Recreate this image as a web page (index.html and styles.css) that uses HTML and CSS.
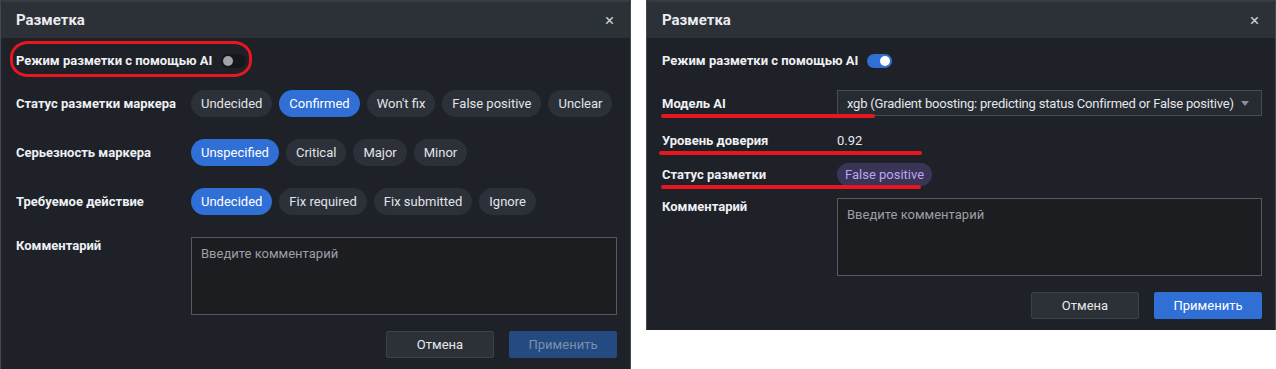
FILE: index.html
```html
<!DOCTYPE html>
<html lang="ru">
<head>
    <meta charset="UTF-8">
    <meta name="viewport" content="width=device-width, initial-scale=1.0">
    <title>Разметка</title>
    <link rel="stylesheet" href="styles.css">
</head>
<body>
    <div class="screens">
        <!-- AI mode off -->
        <section class="dialog dialog-left">
            <header class="dialog-head">
                <h2>Разметка</h2>
                <span class="close">&times;</span>
            </header>
            <div class="dialog-body">
                <div class="row ai-row">
                    <span class="label">Режим разметки с помощью AI</span>
                    <span class="toggle"><span class="knob"></span></span>
                    <span class="mark-ellipse"></span>
                </div>

                <div class="row field-row">
                    <span class="label">Статус разметки маркера</span>
                    <div class="chips">
                        <span class="chip">Undecided</span>
                        <span class="chip active">Confirmed</span>
                        <span class="chip">Won't fix</span>
                        <span class="chip">False positive</span>
                        <span class="chip">Unclear</span>
                    </div>
                </div>

                <div class="row field-row">
                    <span class="label">Серьезность маркера</span>
                    <div class="chips">
                        <span class="chip active">Unspecified</span>
                        <span class="chip">Critical</span>
                        <span class="chip">Major</span>
                        <span class="chip">Minor</span>
                    </div>
                </div>

                <div class="row field-row">
                    <span class="label">Требуемое действие</span>
                    <div class="chips">
                        <span class="chip active">Undecided</span>
                        <span class="chip">Fix required</span>
                        <span class="chip">Fix submitted</span>
                        <span class="chip">Ignore</span>
                    </div>
                </div>

                <div class="row comment-row">
                    <span class="label">Комментарий</span>
                    <div class="textarea">Введите комментарий</div>
                </div>

                <div class="actions">
                    <button class="btn">Отмена</button>
                    <button class="btn btn-primary" disabled>Применить</button>
                </div>
            </div>
        </section>

        <!-- AI mode on -->
        <section class="dialog dialog-right">
            <header class="dialog-head">
                <h2>Разметка</h2>
                <span class="close">&times;</span>
            </header>
            <div class="dialog-body">
                <div class="row ai-row">
                    <span class="label">Режим разметки с помощью AI</span>
                    <span class="toggle on"><span class="knob"></span></span>
                </div>

                <div class="row model-row">
                    <span class="label">Модель AI</span>
                    <div class="select">
                        <span class="select-text">xgb (Gradient boosting: predicting status Confirmed or False positive)</span>
                        <span class="caret"></span>
                    </div>
                    <span class="underline u-model"></span>
                </div>

                <div class="row info-row conf-row">
                    <span class="label">Уровень доверия</span>
                    <span class="value">0.92</span>
                    <span class="underline u-conf"></span>
                </div>

                <div class="row info-row status-row">
                    <span class="label">Статус разметки</span>
                    <span class="badge">False positive</span>
                    <span class="underline u-status"></span>
                </div>

                <div class="row comment-row">
                    <span class="label">Комментарий</span>
                    <div class="textarea">Введите комментарий</div>
                </div>

                <div class="actions">
                    <button class="btn">Отмена</button>
                    <button class="btn btn-primary">Применить</button>
                </div>
            </div>
        </section>
    </div>
</body>
</html>
```

FILE: styles.css
```css
* {
    box-sizing: border-box;
}

body {
    margin: 0;
    background-color: #ffffff;
    font-family: Roboto, "Noto Sans", Arial, sans-serif;
    font-size: 13px;
    color: #e4e6ea;
}

.screens {
    display: flex;
    align-items: flex-start;
    gap: 15px;
}

.dialog {
    width: 631px;
    background-color: #1e2128;
    border-top: 2px solid #383b41;
    border-left: 1px solid #45484e;
    border-right: 1px solid #45484e;
}

.dialog-left {
    height: 369px;
    overflow: hidden;
}

.dialog-right {
    width: 630px;
    padding-bottom: 11px;
}

.dialog-head {
    display: flex;
    justify-content: space-between;
    align-items: center;
    height: 36px;
    padding: 0 16px 0 15px;
    background-color: #2c3037;
    border-radius: 3px 3px 0 0;
}

.dialog-head h2 {
    margin: 0;
    font-size: 15px;
    font-weight: 700;
    color: #ececee;
}

.close {
    font-size: 17px;
    color: #c9cbcf;
}

.dialog-body {
    padding: 9px 13px 0 15px;
}

.row {
    display: flex;
    align-items: center;
    position: relative;
}

.label {
    width: 175px;
    flex-shrink: 0;
    font-weight: 700;
    color: #eef0f3;
    white-space: nowrap;
}

.ai-row {
    height: 27px;
    margin-bottom: 16px;
}

.ai-row .label {
    width: auto;
    margin-right: 9px;
}

.toggle {
    display: flex;
    align-items: center;
    width: 25px;
    height: 14px;
    padding: 0 2px;
    border-radius: 7px;
    background-color: #15171b;
}

.toggle .knob {
    width: 10px;
    height: 10px;
    border-radius: 50%;
    background-color: #a2a4aa;
}

.toggle.on {
    justify-content: flex-end;
    background-color: #2f6fd6;
}

.toggle.on .knob {
    background-color: #ffffff;
}

.mark-ellipse {
    position: absolute;
    left: -6px;
    top: -6px;
    width: 242px;
    height: 36px;
    border: 3px solid #e8171f;
    border-radius: 18px / 16px;
}

.field-row {
    height: 27px;
    margin-bottom: 22px;
}

.chips {
    display: flex;
    gap: 7px;
}

.chip {
    flex-shrink: 0;
    height: 27px;
    line-height: 27px;
    padding: 0 10px;
    border-radius: 14px;
    background-color: #2c3038;
    color: #e2e4e8;
    white-space: nowrap;
}

.chip.active {
    background-color: #2f6fd6;
    color: #ffffff;
}

.comment-row {
    align-items: flex-start;
}

.comment-row .label {
    padding-top: 1px;
}

.textarea {
    width: 426px;
    height: 78px;
    padding: 7px 9px;
    line-height: 18px;
    border: 1px solid #575a60;
    background-color: #1b1d21;
    color: #9c9fa5;
}

.actions {
    display: flex;
    justify-content: flex-end;
    gap: 15px;
    margin-top: 16px;
}

.btn {
    width: 108px;
    height: 27px;
    border: 1px solid #3c4047;
    border-radius: 2px;
    background-color: #2c3037;
    color: #e8e9eb;
    font-family: inherit;
    font-size: 13px;
}

.btn-primary {
    border-color: #2f6fd6;
    background-color: #2f6fd6;
    color: #ffffff;
}

.btn-primary:disabled {
    border-color: #244a82;
    background-color: #244a82;
    color: #7d8eaa;
}

.model-row {
    height: 26px;
    margin-bottom: 12px;
}

.select {
    display: flex;
    justify-content: space-between;
    align-items: center;
    width: 426px;
    height: 26px;
    padding: 0 12px 0 9px;
    border: 1px solid #484b52;
    background-color: #262a31;
    color: #e4e6ea;
}

.select-text {
    white-space: nowrap;
    letter-spacing: -0.2px;
}

.caret {
    flex-shrink: 0;
    width: 0;
    height: 0;
    border-left: 4px solid transparent;
    border-right: 4px solid transparent;
    border-top: 5px solid #8c8f95;
}

.info-row {
    height: 24px;
}

.conf-row {
    margin-bottom: 10px;
}

.status-row {
    margin-bottom: 12px;
}

.value {
    color: #e8e9eb;
}

.badge {
    height: 23px;
    line-height: 23px;
    padding: 0 8px;
    border-radius: 12px;
    background-color: #3a3456;
    color: #b8a7ef;
    white-space: nowrap;
}

/* red marker annotations */
.underline {
    position: absolute;
    height: 4px;
    border-radius: 2px;
    background-color: #e8171f;
}

.u-model {
    left: -1px;
    top: 24px;
    width: 214px;
}

.u-conf {
    left: -3px;
    top: 23px;
    width: 263px;
}

.u-status {
    left: -1px;
    top: 23px;
    width: 260px;
}
```
